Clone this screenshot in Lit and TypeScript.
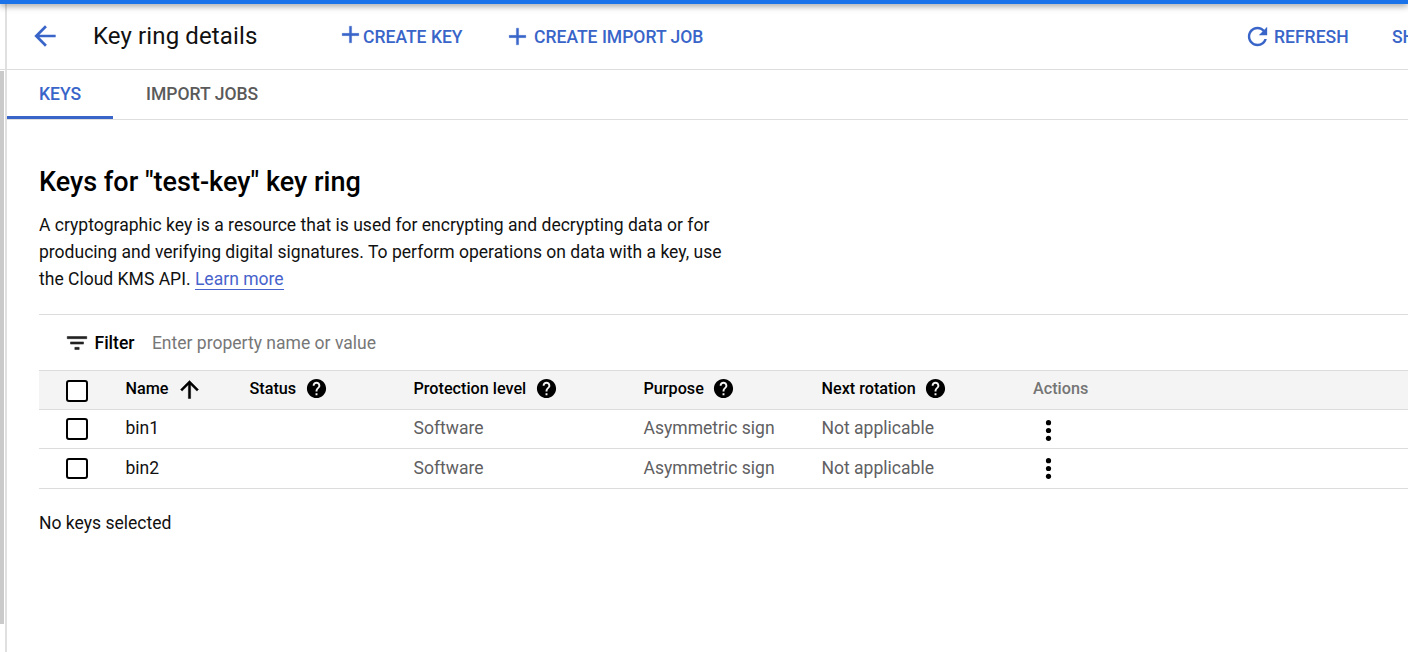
import { LitElement, html, css, svg } from "lit";
import { customElement, property } from "lit/decorators.js";

const icons: Record<string, unknown> = {
  back: svg`<path d="M20 11H7.83l5.59-5.59L12 4l-8 8 8 8 1.41-1.41L7.83 13H20v-2z"/>`,
  up: svg`<path d="M4 12l1.41 1.41L11 7.83V20h2V7.83l5.58 5.59L20 12l-8-8-8 8z" stroke="currentColor" stroke-width=".4"/>`,
  plus: svg`<path d="M20 13.1h-6.9V20h-2.2v-6.9H4v-2.2h6.9V4h2.2v6.9H20z" stroke="currentColor" stroke-width=".3"/>`,
  refresh: svg`<path d="M17.65 6.35C16.2 4.9 14.21 4 12 4c-4.42 0-7.99 3.58-7.99 8s3.57 8 7.99 8c3.73 0 6.84-2.55 7.73-6h-2.08c-.82 2.33-3.04 4-5.65 4-3.31 0-6-2.69-6-6s2.69-6 6-6c1.66 0 3.14.69 4.22 1.78L13 11h7V4l-2.35 2.35z"/>`,
  filter: svg`<path d="M10 18h4v-2h-4v2zM3 6v2h18V6H3zm3 7h12v-2H6v2z" stroke="currentColor" stroke-width=".5"/>`,
  help: svg`<path d="M12 2C6.48 2 2 6.48 2 12s4.48 10 10 10 10-4.48 10-10S17.52 2 12 2zm1 17h-2v-2h2v2zm2.07-7.75l-.9.92C13.45 12.9 13 13.5 13 15h-2v-.5c0-1.1.45-2.1 1.17-2.83l1.24-1.26c.37-.36.59-.86.59-1.41 0-1.1-.9-2-2-2s-2 .9-2 2H8c0-2.21 1.79-4 4-4s4 1.79 4 4c0 .88-.36 1.68-.93 2.25z"/>`,
  more: svg`<circle cx="12" cy="3.8" r="2.7"/><circle cx="12" cy="12" r="2.7"/><circle cx="12" cy="20.2" r="2.7"/>`,
};

@customElement("ui-icon")
class UiIcon extends LitElement {
  @property() name = "";
  static styles = css`
    :host { display: block; flex: none; }
    .glyph { display: block; width: 100%; height: 100%; fill: currentColor; }
  `;
  render() {
    return html`<svg class="glyph" viewBox="0 0 24 24">${icons[this.name]}</svg>`;
  }
}

const keys = ["bin1", "bin2"];

@customElement("app-root")
class AppRoot extends LitElement {
  static styles = css`
    * { box-sizing: border-box; }
    :host {
      display: block; height: 652px; overflow: hidden; background: #fff; color: #111;
      font-family: Roboto, "Liberation Sans", sans-serif; font-size: 17.54px;
    }
    .topbar { position: relative; height: 4px; background: #1a73e8; box-shadow: 0 1px 7px rgba(0, 0, 0, .6); }
    .shell { display: flex; height: 648px; }
    .rail { width: 7px; flex: none; border-right: 2px solid #e0e0e0; padding-top: 65px; }
    .rail-top { width: 5px; height: 2px; border-top: 1px solid #ddd; }
    .thumb { width: 4px; height: 553px; background: #cacaca; }
    .main { flex: 1; min-width: 0; overflow: hidden; }
    .header { display: flex; align-items: center; height: 66px; border-bottom: 1px solid #dedede; color: #3965c9; white-space: nowrap; }
    .back { width: 32px; height: 32px; margin: 0 0 1px 22px; }
    .title { width: 246px; margin: 0 0 1px 32px; font-size: 24px; font-weight: 400; color: #111; letter-spacing: .12px; }
    .action { display: flex; align-items: center; font-weight: 500; font-size: 17.55px; padding-top: 1px; }
    .key { width: 167px; }
    .job { flex: 1; }
    .plus { width: 25px; height: 25px; margin-left: -1px; }
    .key .plus { margin-top: -5px; }
    .job .plus { margin: -1px 4px 0 -1px; }
    .refresh { width: 149px; }
    .refresh-icon { width: 29px; height: 29px; margin: -1px 2px 0 0; }
    .clip { width: 16px; overflow: hidden; }
    .tabs { display: flex; height: 50px; border-bottom: 1px solid #dedede; font-weight: 500; }
    .tab { height: 49px; padding: 0 32px; line-height: 48px; color: #5a5a5a; white-space: nowrap; }
    .tab.on { width: 106px; color: #3965c9; border-bottom: 3px solid #3965c9; margin-right: 1px; }
    .content { padding: 44px 0 0 32px; }
    .heading { margin: 0; font-size: 27px; line-height: 36px; font-weight: 500; color: #000; }
    .intro { margin: 12px 0 0; line-height: 27px; white-space: nowrap; }
    .link { color: #4763cc; border-bottom: 1px solid #4763cc; }
    .panel { margin-top: 21px; border-top: 1px solid #dcdcdc; white-space: nowrap; }
    .filter { display: flex; align-items: center; height: 55px; padding-left: 25px; }
    .filter-icon { width: 26px; height: 26px; color: #222; }
    .filter-name { width: 57.4px; margin-left: 4.5px; font-weight: 500; color: #000; }
    .hint { color: #777; }
    .row { display: grid; grid-template-columns: 86.5px 124px 164px 230px 178px 211.5px 1fr; align-items: center; height: 39px; border-bottom: 1px solid #dcdcdc; color: #5f6062; }
    .row.last { height: 40px; }
    .row.head { height: 40px; border-top: 1px solid #dcdcdc; background: #f4f4f4; font-size: 16.2px; font-weight: 500; color: #000; }
    .cell { display: flex; align-items: center; padding-bottom: 3px; }
    .last .cell { padding-bottom: 1.5px; }
    .name { color: #111; }
    .box { width: 22px; height: 22px; margin-left: 27px; border: 2px solid #000; border-radius: 3px; background: #fff; }
    .head .box { margin-top: 1px; }
    .last .box { height: 21px; }
    .row .help { width: 23px; height: 23px; margin: 0 0 0 8.5px; }
    .row .sort { width: 27px; height: 27px; margin: 2px 0 0 8px; }
    .muted { color: #757575; }
    .more { width: 23px; height: 23px; margin: 2px 0 0 4px; color: #000; }
    .last .more { margin-top: 0; }
    .note { margin: 22px 0 0; line-height: 24px; }
  `;

  private column(label: string) {
    return html`<div class="cell">${label}<ui-icon class="help" name="help"></ui-icon></div>`;
  }

  render() {
    return html`
      <div class="topbar"></div>
      <div class="shell">
        <div class="rail"><div class="rail-top"></div><div class="thumb"></div></div>
        <div class="main">
          <div class="header">
            <ui-icon class="back" name="back"></ui-icon>
            <h1 class="title">Key ring details</h1>
            <div class="action key"><ui-icon class="plus" name="plus"></ui-icon>CREATE KEY</div>
            <div class="action job"><ui-icon class="plus" name="plus"></ui-icon>CREATE IMPORT JOB</div>
            <div class="action refresh"><ui-icon class="refresh-icon" name="refresh"></ui-icon>REFRESH</div>
            <div class="action clip">SH</div>
          </div>
          <div class="tabs"><div class="tab on">KEYS</div><div class="tab">IMPORT JOBS</div></div>
          <div class="content">
            <h2 class="heading">Keys for "test-key" key ring</h2>
            <p class="intro">A cryptographic key is a resource that is used for encrypting and decrypting data or for<br>producing and verifying digital signatures. To perform operations on data with a key, use<br>the Cloud KMS API. <a class="link">Learn more</a></p>
            <div class="panel">
              <div class="filter">
                <ui-icon class="filter-icon" name="filter"></ui-icon>
                <span class="filter-name">Filter</span><span class="hint">Enter property name or value</span>
              </div>
              <div class="row head">
                <div class="box"></div>
                <div class="cell">Name<ui-icon class="sort" name="up"></ui-icon></div>
                ${["Status", "Protection level", "Purpose", "Next rotation"].map((c) => this.column(c))}
                <div class="cell muted">Actions</div>
              </div>
              ${keys.map((k, i) => html`
                <div class="row ${i === keys.length - 1 ? "last" : ""}">
                  <div class="box"></div>
                  <div class="cell name">${k}</div>
                  <div></div>
                  <div class="cell">Software</div>
                  <div class="cell">Asymmetric sign</div>
                  <div class="cell">Not applicable</div>
                  <ui-icon class="more" name="more"></ui-icon>
                </div>`)}
            </div>
            <p class="note">No keys selected</p>
          </div>
        </div>
      </div>`;
  }
}
